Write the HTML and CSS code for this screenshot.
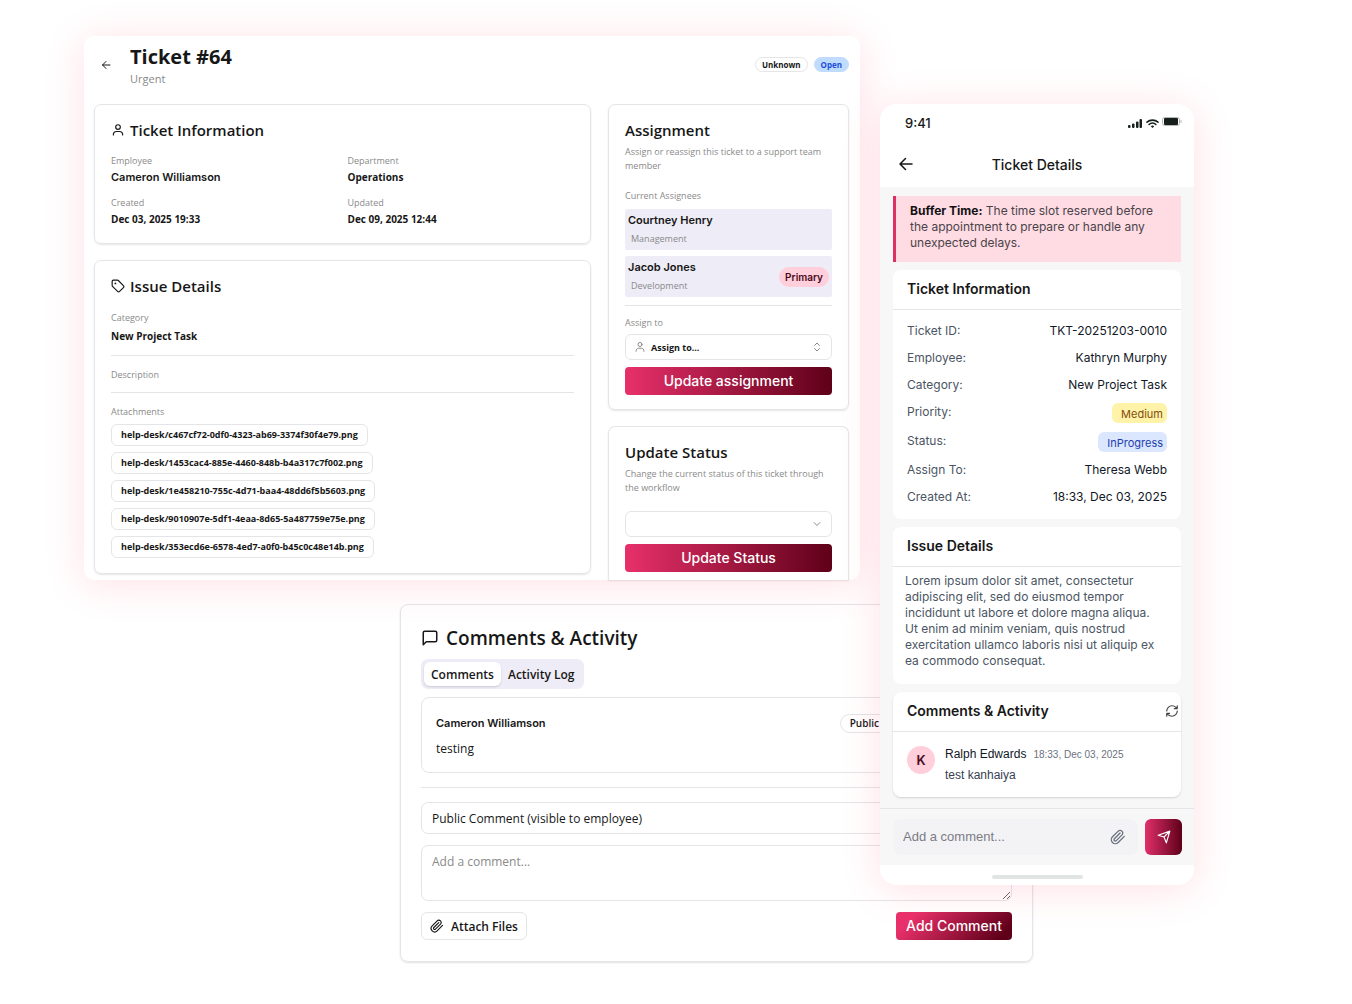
FILE: index.html
```html
<!DOCTYPE html>
<html lang="en">
<head>
<meta charset="utf-8">
<meta name="viewport" content="width=device-width, initial-scale=1">
<title>Ticket #64</title>
<link rel="stylesheet" href="styles.css">
</head>
<body>
<svg class="sprite" aria-hidden="true">
  <symbol id="i-back" viewBox="0 0 24 24"><path d="m12 19-7-7 7-7M20 12H5"/></symbol>
  <symbol id="i-user" viewBox="0 0 24 24"><path d="M4 20.500c0-4 2.500-6 5.500-6h5c3 0 5.500 2 5.500 6"/><circle cx="12" cy="7" r="4"/></symbol>
  <symbol id="i-tag" viewBox="0 0 24 24"><path d="M12.586 2.586A2 2 0 0 0 11.172 2H4a2 2 0 0 0-2 2v7.172a2 2 0 0 0 .586 1.414l8.704 8.704a2.426 2.426 0 0 0 3.42 0l6.58-6.58a2.426 2.426 0 0 0 0-3.42z"/><circle cx="7.5" cy="7.5" r=".6"/></symbol>
  <symbol id="i-message" viewBox="0 0 24 24"><path d="M21 15a2 2 0 0 1-2 2H7l-4 4V5a2 2 0 0 1 2-2h14a2 2 0 0 1 2 2z"/></symbol>
  <symbol id="i-clip" viewBox="0 0 24 24"><path d="m21.44 11.05-9.19 9.19a6 6 0 0 1-8.49-8.49l8.57-8.57A4 4 0 1 1 18 8.84l-8.59 8.57a2 2 0 0 1-2.83-2.83l8.49-8.48"/></symbol>
  <symbol id="i-updown" viewBox="0 0 24 24"><path d="m7 15 5 5 5-5M7 9l5-5 5 5"/></symbol>
  <symbol id="i-down" viewBox="0 0 24 24"><path d="m6 9 6 6 6-6"/></symbol>
  <symbol id="i-refresh" viewBox="0 0 24 24"><path d="M3 12a9 9 0 0 1 9-9 9.75 9.75 0 0 1 6.74 2.74L21 8M21 3v5h-5M21 12a9 9 0 0 1-9 9 9.75 9.75 0 0 1-6.74-2.74L3 16M8 16H3v5"/></symbol>
  <symbol id="i-send" viewBox="0 0 24 24"><path d="M22 2 16 22l-4-10L2 9zM22 2 12 12"/></symbol>
</svg>

<main class="stage">
  <section class="desk">
    <header class="desk-head">
      <button class="icon-btn" type="button" aria-label="Back"><svg class="icon icon-sm"><use href="#i-back"/></svg></button>
      <div class="desk-title">
        <h1>Ticket #64</h1>
        <p>Urgent</p>
      </div>
      <span class="pill">Unknown</span>
      <span class="pill pill-open">Open</span>
    </header>

    <div class="desk-body">
      <div class="column">
        <section class="card">
          <h2><svg class="icon"><use href="#i-user"/></svg>Ticket Information</h2>
          <dl class="facts">
            <div><dt>Employee</dt><dd class="person">Cameron Williamson</dd></div>
            <div><dt>Department</dt><dd>Operations</dd></div>
            <div><dt>Created</dt><dd>Dec 03, 2025 19:33</dd></div>
            <div><dt>Updated</dt><dd>Dec 09, 2025 12:44</dd></div>
          </dl>
        </section>

        <section class="card card-fill">
          <h2><svg class="icon"><use href="#i-tag"/></svg>Issue Details</h2>
          <div class="block block-first">
            <p class="label">Category</p>
            <p class="value">New Project Task</p>
          </div>
          <div class="block"><p class="label">Description</p></div>
          <div class="block">
            <p class="label">Attachments</p>
            <ul class="files">
              <li><a href="#">help-desk/c467cf72-0df0-4323-ab69-3374f30f4e79.png</a></li>
              <li><a href="#">help-desk/1453cac4-885e-4460-848b-b4a317c7f002.png</a></li>
              <li><a href="#">help-desk/1e458210-755c-4d71-baa4-48dd6f5b5603.png</a></li>
              <li><a href="#">help-desk/9010907e-5df1-4eaa-8d65-5a487759e75e.png</a></li>
              <li><a href="#">help-desk/353ecd6e-6578-4ed7-a0f0-b45c0c48e14b.png</a></li>
            </ul>
          </div>
        </section>
      </div>

      <div class="column">
        <section class="card">
          <h2>Assignment</h2>
          <p class="hint">Assign or reassign this ticket to a support team member</p>
          <p class="label">Current Assignees</p>
          <ul class="assignees">
            <li><div><strong>Courtney Henry</strong><span>Management</span></div></li>
            <li><div><strong>Jacob Jones</strong><span>Development</span></div><em>Primary</em></li>
          </ul>
          <label class="label" for="assign">Assign to</label>
          <div class="picker picker-lead">
            <select id="assign"><option>Assign to...</option></select>
            <svg class="icon icon-sm lead"><use href="#i-user"/></svg>
            <svg class="icon icon-sm trail"><use href="#i-updown"/></svg>
          </div>
          <button class="primary" type="button">Update assignment</button>
        </section>

        <section class="card card-fill card-cut">
          <h2>Update Status</h2>
          <p class="hint">Change the current status of this ticket through the workflow</p>
          <div class="picker">
            <select aria-label="Status"><option></option></select>
            <svg class="icon icon-sm trail"><use href="#i-down"/></svg>
          </div>
          <button class="primary" type="button">Update Status</button>
        </section>
      </div>
    </div>
  </section>

  <section class="talk">
    <h2><svg class="icon icon-lg"><use href="#i-message"/></svg>Comments &amp; Activity</h2>
    <div class="tabs" role="tablist">
      <button type="button" role="tab" aria-selected="true">Comments</button>
      <button type="button" role="tab" aria-selected="false">Activity Log</button>
    </div>
    <article class="comment">
      <header><h3>Cameron Williamson</h3><span class="pill pill-public">Public</span></header>
      <p>testing</p>
    </article>
    <form class="reply">
      <select aria-label="Comment visibility"><option>Public Comment (visible to employee)</option></select>
      <textarea aria-label="Comment" placeholder="Add a comment..."></textarea>
      <div class="reply-actions">
        <button class="attach" type="button"><svg class="icon"><use href="#i-clip"/></svg>Attach Files</button>
        <button class="primary primary-diag" type="button">Add Comment</button>
      </div>
    </form>
  </section>

  <section class="phone">
    <header class="phone-top">
      <div class="status">
        <span>9:41</span>
        <svg class="status-icons" viewBox="0 0 56 12">
          <rect x="2" y="8" width="2.500" height="3" rx="1"/><rect x="6" y="6.500" width="2.500" height="4.500" rx="1"/><rect x="10" y="4.500" width="2.500" height="6.500" rx="1"/><rect x="13.500" y="2" width="2.500" height="9" rx="1"/>
          <path class="wave" d="M21 5.200a8.200 8.200 0 0 1 11 0M23.100 7.500a5 5 0 0 1 6.800 0"/><path d="M24.800 9.200a2.600 2.600 0 0 1 3.400 0L26.500 11z"/>
          <rect class="cell" x="36.500" y=".5" width="17" height="8" rx="2"/><rect x="38" y="1" width="14" height="7" rx="1"/><rect class="tip" x="54.500" y="3" width="1" height="3"/>
        </svg>
      </div>
      <div class="phone-nav">
        <button class="icon-btn" type="button" aria-label="Back"><svg class="nav-arrow" viewBox="0 0 16 16"><path d="M14 7H2M7.500 1.500 2 7l5.500 5.500"/></svg></button>
        <h2>Ticket Details</h2>
      </div>
    </header>

    <div class="phone-body">
      <p class="alert"><strong>Buffer Time:</strong> The time slot reserved before the appointment to prepare or handle any unexpected delays.</p>

      <section class="tile">
        <h3>Ticket Information</h3>
        <dl class="pairs">
          <div><dt>Ticket ID:</dt><dd>TKT-20251203-0010</dd></div>
          <div><dt>Employee:</dt><dd>Kathryn Murphy</dd></div>
          <div><dt>Category:</dt><dd>New Project Task</dd></div>
          <div><dt>Priority:</dt><dd class="chip chip-medium">Medium</dd></div>
          <div><dt>Status:</dt><dd class="chip chip-progress">InProgress</dd></div>
          <div><dt>Assign To:</dt><dd>Theresa Webb</dd></div>
          <div><dt>Created At:</dt><dd>18:33, Dec 03, 2025</dd></div>
        </dl>
      </section>

      <section class="tile">
        <h3>Issue Details</h3>
        <p class="lorem">Lorem ipsum dolor sit amet, consectetur adipiscing elit, sed do eiusmod tempor incididunt ut labore et dolore magna aliqua. Ut enim ad minim veniam, quis nostrud exercitation ullamco laboris nisi ut aliquip ex ea commodo consequat.</p>
      </section>

      <section class="tile">
        <h3>Comments &amp; Activity
          <button class="icon-btn" type="button" aria-label="Refresh"><svg class="icon"><use href="#i-refresh"/></svg></button>
        </h3>
        <article class="note">
          <span class="avatar">K</span>
          <div>
            <p><b>Ralph Edwards</b><time>18:33, Dec 03, 2025</time></p>
            <p class="note-text">test kanhaiya</p>
          </div>
        </article>
      </section>
    </div>

    <form class="composer">
      <div class="composer-box">
        <input type="text" aria-label="Add a comment" placeholder="Add a comment...">
        <button class="icon-btn" type="button" aria-label="Attach"><svg class="icon icon-md"><use href="#i-clip"/></svg></button>
      </div>
      <button class="send" type="button" aria-label="Send"><svg class="icon"><use href="#i-send"/></svg></button>
    </form>
    <div class="home"><span></span></div>
  </section>
</main>
</body>
</html>
```

FILE: styles.css
```css
* { box-sizing: border-box; }

:root {
  --ui: "Open Sans", "Noto Sans", sans-serif;
  --alt: Inter, sans-serif;
  --ink: #171717;
  --muted: #8a8a8a;
  --line: #e5e5e8;
  --lilac: #eeecf6;
}

body {
  margin: 0;
  background: #fff;
  color: var(--ink);
  font-family: var(--ui);
}

h1, h2, h3, p, dl, dd, ul { margin: 0; padding: 0; }
ul { list-style: none; }
button, select, input, textarea { font: inherit; color: inherit; margin: 0; }
button { cursor: pointer; }

.sprite { display: none; }

.icon, .wave, .nav-arrow {
  fill: none;
  stroke: currentColor;
  stroke-width: 2;
  stroke-linecap: round;
  stroke-linejoin: round;
}
.icon { width: 14px; height: 14px; flex: none; }
.icon-sm { width: 12px; height: 12px; }
.icon-md { width: 16px; height: 16px; }
.icon-lg { width: 18px; height: 18px; }

.icon-btn {
  display: grid;
  place-items: center;
  padding: 0;
  border: 0;
  background: none;
}

/* The three windows overlap, so they share one grid. */
.stage {
  display: grid;
  grid-template-columns: 84fr 316fr 460fr 20fr 153fr 161fr 158fr;
  align-items: start;
  padding: 36px 0;
}

.desk {
  grid-column: 2 / 4;
  grid-row: 1;
  z-index: 1;
  padding: 0 11px 0 10px;
  border-radius: 10px;
  background: #fff;
  box-shadow: 0 4px 40px rgba(255, 60, 100, .16);
}
.talk {
  grid-column: 3 / 6;
  grid-row: 2;
  margin-top: 24px;
}
.phone {
  grid-column: 5 / 7;
  grid-row: 1 / 3;
  z-index: 2;
  margin-top: 68px;
}

/* Ticket window */
.desk-head {
  display: flex;
  align-items: center;
  gap: 6px;
  height: 68px;
  padding-bottom: 11px;
}
.desk-head .icon-btn { width: 24px; height: 24px; }
.desk-title { flex: 1; padding: 3px 0 0 6px; }
.desk-title h1 { font-size: 20px; line-height: 26px; font-weight: 700; }
.desk-title p { font-size: 11px; line-height: 18px; color: var(--muted); }

.pill {
  padding: 0 6px;
  border: 1px solid var(--line);
  border-radius: 8px;
  font-size: 8px;
  line-height: 13px;
  font-weight: 700;
}
.pill-open { border-color: #bfdbfe; background: #bfdbfe; color: #1d4ed8; }

.desk-body {
  display: grid;
  grid-template-columns: 33fr 16fr;
  gap: 17px;
}
.column { display: flex; flex-direction: column; gap: 16px; padding-bottom: 6px; }
.column:last-child { padding-bottom: 0; }

.card {
  padding: 13px 16px 14px;
  border: 1px solid var(--line);
  border-radius: 7px;
  box-shadow: 0 1px 2px rgba(0, 0, 0, .1);
}
.card:first-child { min-height: 140px; }
.card-fill { flex: 1; }
.card-cut {
  padding-bottom: 8px;
  border-bottom: 0;
  border-radius: 7px 7px 0 0;
}
.card h2 {
  display: flex;
  align-items: center;
  gap: 5px;
  font-size: 15px;
  line-height: 24px;
  font-weight: 600;
}
.label, .facts dt, .hint {
  display: block;
  font-size: 9px;
  line-height: 14px;
  color: var(--muted);
}
.value, .facts dd { font-size: 10px; line-height: 18px; font-weight: 700; }
.facts .person { font-family: var(--alt); font-size: 11px; font-weight: 600; }

.facts {
  display: grid;
  grid-template-columns: 1fr 1fr;
  gap: 10px;
  margin-top: 12px;
}
.block { padding-top: 12px; }
.block-first { padding-top: 13px; }
.block:not(:last-child) { padding-bottom: 10px; border-bottom: 1px solid var(--line); }
.value { margin-top: 2px; }

.files { display: grid; justify-items: start; gap: 6px; margin-top: 5px; }
.files a {
  display: block;
  padding: 0 9px;
  border: 1px solid var(--line);
  border-radius: 6px;
  font-size: 9px;
  line-height: 20px;
  font-weight: 700;
  color: var(--ink);
  text-decoration: none;
}

.hint { margin: 3px 0 16px; }
.assignees {
  display: grid;
  gap: 6px;
  margin: 6px 0 10px;
  padding-bottom: 8px;
  border-bottom: 1px solid var(--line);
}
.assignees li {
  display: flex;
  align-items: center;
  padding: 2px 3px;
  border-radius: 2px;
  background: var(--lilac);
}
.assignees div { flex: 1; }
.assignees strong { display: block; font: 600 11px/18px var(--alt); }
.assignees div span { display: block; padding-left: 3px; font-size: 9px; line-height: 19px; color: var(--muted); }
.assignees em {
  padding: 0 6px;
  border-radius: 10px;
  background: #ffcfdb;
  color: #4a0a1c;
  font: 600 10px/20px var(--alt);
}

.picker { display: grid; align-items: center; margin: 4px 0 7px; }
.picker > * { grid-area: 1 / 1; }
.picker select {
  width: 100%;
  height: 26px;
  padding: 0 9px;
  border: 1px solid var(--line);
  border-radius: 6px;
  background: #fff;
  appearance: none;
  font-size: 9px;
  font-weight: 700;
}
.picker-lead select { padding-left: 25px; }
.picker svg { color: var(--muted); pointer-events: none; }
.lead { margin-left: 9px; }
.trail { justify-self: end; margin-right: 9px; }

.primary {
  display: block;
  width: 100%;
  height: 28px;
  padding: 0;
  border: 0;
  border-radius: 4px;
  background: linear-gradient(90deg, #e8306a, #5f0019);
  color: #fff;
  font: 500 14px/28px var(--alt);
}
.primary-diag { width: 116px; background: linear-gradient(135deg, #e8306a 15%, #5f0019 90%); }

/* Comments window */
.talk {
  padding: 20px 20px 21px;
  border: 1px solid var(--line);
  border-radius: 8px;
  box-shadow: 0 1px 2px rgba(0, 0, 0, .12);
}
.talk > h2 {
  display: flex;
  align-items: center;
  gap: 7px;
  font-size: 19px;
  line-height: 26px;
  font-weight: 600;
}
.tabs {
  display: inline-flex;
  margin-top: 8px;
  padding: 3px;
  border-radius: 7px;
  background: var(--lilac);
}
.tabs button {
  height: 24px;
  padding: 0 7px;
  border: 0;
  border-radius: 6px;
  background: none;
  font-size: 12px;
  font-weight: 600;
}
.tabs [aria-selected="true"] { background: #fff; box-shadow: 0 1px 2px rgba(0, 0, 0, .15); }

.comment {
  margin-top: 8px;
  padding: 15px 14px 13px;
  border: 1px solid var(--line);
  border-radius: 8px;
}
.comment header { display: flex; align-items: center; justify-content: space-between; padding-right: 108px; }
.comment h3 { font: 600 11px/20px var(--alt); }
.comment > p { margin-top: 6px; font-size: 12px; line-height: 20px; }
.pill-public { padding: 0 9px; border-radius: 10px; font-size: 10px; line-height: 17px; font-weight: 600; }

.reply {
  display: grid;
  gap: 11px;
  margin-top: 14px;
  padding-top: 14px;
  border-top: 1px solid var(--line);
}
.reply select, .reply textarea {
  width: 100%;
  padding: 0 10px;
  border: 1px solid var(--line);
  border-radius: 7px;
  background: none;
  font-size: 12px;
}
.reply select { height: 32px; appearance: none; }
.reply textarea { display: block; height: 56px; padding-top: 7px; line-height: 18px; resize: vertical; }
.reply textarea::placeholder { color: var(--muted); }
.reply-actions { display: flex; justify-content: space-between; }
.attach {
  display: flex;
  align-items: center;
  gap: 7px;
  height: 28px;
  padding: 0 8px;
  border: 1px solid var(--line);
  border-radius: 6px;
  background: none;
  font-size: 12px;
  font-weight: 600;
}

/* Phone window */
.phone {
  overflow: hidden;
  border-radius: 16px;
  background: #f7f7f7;
  box-shadow: 0 4px 40px rgba(255, 60, 100, .16);
  font-family: var(--alt);
}
.phone-top { height: 83px; background: #fff; }
.status {
  display: flex;
  align-items: center;
  justify-content: space-between;
  padding: 9px 12px 0 25px;
  font-size: 13px;
  line-height: 20px;
  font-weight: 500;
}
.status-icons { width: 56px; height: 12px; fill: #171f1d; }
.wave { stroke: #171f1d; stroke-width: 1.600; }
.cell { fill: none; stroke: #b5b8b7; }
.tip { fill: #b5b8b7; }
.phone-nav {
  display: grid;
  grid-template-columns: 18px 1fr 18px;
  align-items: center;
  margin-top: 20px;
  padding: 0 17px;
}
.nav-arrow { width: 16px; height: 16px; stroke-width: 1.500; }
.phone-nav h2 { text-align: center; font-size: 14px; line-height: 24px; font-weight: 500; }

.phone-body { display: grid; gap: 8px; padding: 9px 13px 11px; }
.alert {
  padding: 7px 12px 11px 14px;
  border-left: 3px solid #de3163;
  background: #ffdbe4;
  color: #4a4448;
  font-size: 12px;
  line-height: 16px;
}
.alert strong { color: #111; font-weight: 700; }

.tile { border-radius: 8px; background: #fff; }
.tile:last-child { box-shadow: 0 1px 2px rgba(0, 0, 0, .15); }
.tile h3 {
  display: flex;
  align-items: center;
  justify-content: space-between;
  height: 40px;
  padding: 0 2px 2px 14px;
  border-bottom: 1px solid var(--line);
  font-size: 14px;
  font-weight: 600;
}
.tile h3 .icon-btn { color: #444; }
.pairs { display: grid; gap: 9px; padding: 12px 14px 13px; }
.pairs div { display: flex; justify-content: space-between; font-size: 12px; line-height: 18px; }
.pairs dt { color: #4b5563; }
.pairs dd { color: #111827; }
.pairs .chip { border-radius: 6px; padding: 2px 4px 0 9px; font-size: 11px; }
.pairs .chip-medium { background: #fef3a8; color: #854d0e; }
.pairs .chip-progress { background: #dbe7fe; color: #1e40af; }

.lorem { padding: 6px 20px 15px 12px; color: #4b5563; font-size: 12px; line-height: 16px; }

.note { display: flex; gap: 10px; padding: 12px 14px; font-family: "Liberation Sans", Arial, sans-serif; }
.avatar {
  width: 28px;
  height: 28px;
  margin-top: 2px;
  border-radius: 50%;
  background: #ffcfdb;
  color: #4a0a1c;
  text-align: center;
  font: 600 13px/28px var(--alt);
}
.note p { font-size: 12px; line-height: 20px; color: #374151; }
.note b { font-weight: 400; color: #111827; }
.note time { margin-left: 7px; font-size: 10px; color: #6b7280; }

.composer {
  display: flex;
  gap: 7px;
  padding: 10px 12px 10px 13px;
  border-top: 1px solid var(--line);
}
.composer-box {
  display: flex;
  flex: 1;
  align-items: center;
  min-width: 0;
  padding: 0 12px 0 10px;
  border-radius: 8px;
  background: #f3f3f5;
  color: #6b7280;
}
.composer input {
  flex: 1;
  min-width: 0;
  padding: 0;
  border: 0;
  background: none;
  font: 13px/20px "Liberation Sans", Arial, sans-serif;
}
.composer input::placeholder { color: #7b7b85; }
.send {
  display: grid;
  place-items: center;
  width: 37px;
  height: 36px;
  border: 0;
  border-radius: 6px;
  background: linear-gradient(90deg, #e0306a, #5f0019);
  color: #fff;
}
.home { display: grid; justify-items: center; padding: 10px 0 6px; background: #fff; }
.home span { width: 91px; height: 4px; border-radius: 2px; background: #e0e4e3; }
```
